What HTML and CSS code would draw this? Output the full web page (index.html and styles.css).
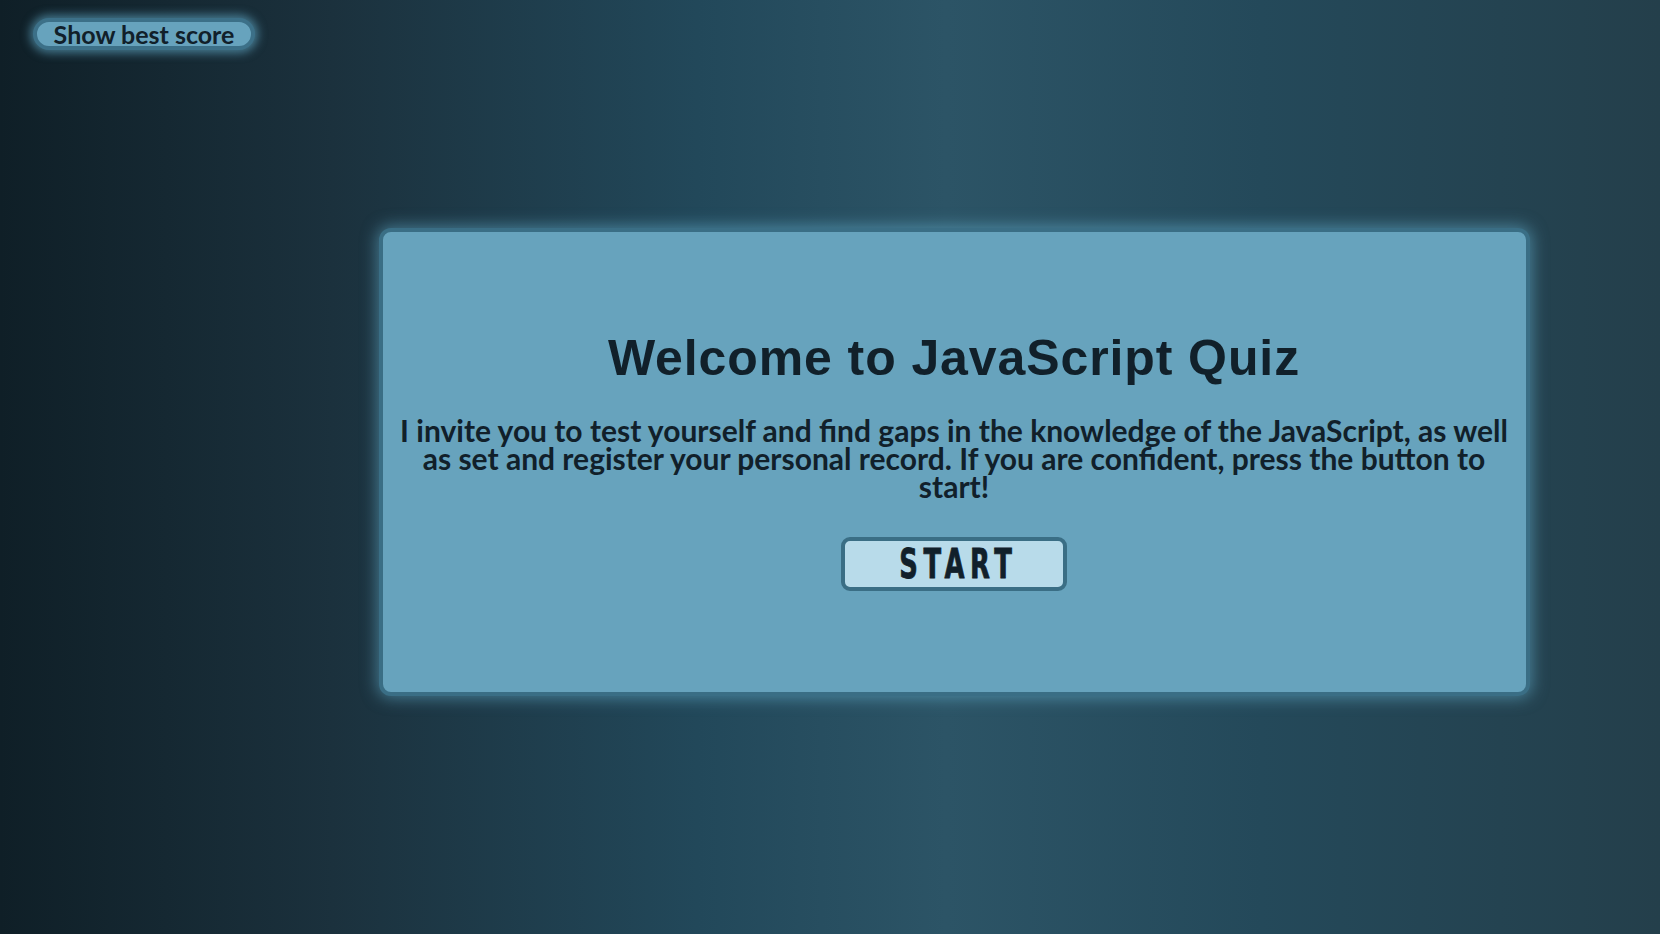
FILE: index.html
```html
<!DOCTYPE html>
<html lang="en">
<head>
<meta charset="utf-8">
<title>JavaScript Quiz</title>
<link rel="stylesheet" href="styles.css">
</head>
<body>
  <aside class="side">
    <button class="best-btn">Show best score</button>
  </aside>
  <main class="stage">
    <section class="card">
      <h1 class="title">Welcome to JavaScript Quiz</h1>
      <p class="intro">I invite you to test yourself and find gaps in the knowledge of the JavaScript, as well as set and register your personal record. If you are confident, press the button to start!</p>
      <button class="start-btn"><span class="start-label">START</span></button>
    </section>
  </main>
</body>
</html>
```
FILE: styles.css
```css
* { box-sizing: border-box; }

html, body { height: 100%; }

body {
  margin: 0;
  display: flex;
  background: linear-gradient(to right, #0f1f27 0%, #1b313d 20%, #22485a 42%, #2c5466 57%, #24495a 76%, #243f4b 100%);
  color: #11202a;
  font-family: "Lato", "Open Sans", sans-serif;
  overflow: hidden;
}

.side {
  width: 248px;
  flex: none;
  padding: 18px 0 0 33px;
}

.best-btn {
  display: block;
  width: 222px;
  height: 32px;
  padding: 0;
  border: 4px solid #3c7088;
  border-radius: 16px;
  background: #67a3bd;
  color: #11202a;
  font-family: "Lato", sans-serif;
  font-weight: 700;
  font-size: 25px;
  line-height: 22px;
  box-shadow: 0 0 10px 3px rgba(110, 190, 222, 0.55);
}

.stage {
  flex: 1;
  display: flex;
  align-items: center;
  justify-content: center;
  padding-bottom: 10px;
}

.card {
  width: 1151px;
  height: 468px;
  border: 4px solid #3a6e85;
  border-radius: 12px;
  background: #67a3bd;
  box-shadow: 0 0 16px 2px rgba(110, 190, 222, 0.5);
  display: flex;
  flex-direction: column;
  align-items: center;
  padding: 97px 16px 0;
}

.title {
  margin: 0;
  font-family: "Liberation Sans", Arial, sans-serif;
  font-weight: 700;
  font-size: 50px;
  line-height: 58px;
  letter-spacing: 0.9px;
  color: #11202a;
}

.intro {
  margin: 29px 0 0;
  font-family: "Lato", sans-serif;
  font-weight: 700;
  font-size: 30px;
  line-height: 28px;
  text-align: center;
  color: #11202a;
}

.start-btn {
  margin-top: 37px;
  width: 226px;
  height: 54px;
  padding: 0;
  border: 4px solid #3a6e85;
  border-radius: 9px;
  background: #b8dbea;
  color: #11202a;
  display: flex;
  align-items: center;
  justify-content: center;
}

.start-label {
  display: inline-block;
  font-family: "DejaVu Sans Condensed", "DejaVu Sans", sans-serif;
  font-weight: 700;
  font-size: 41px;
  line-height: 46px;
  letter-spacing: 8px;
  margin-right: -8px;
  transform: scaleX(0.7);
  -webkit-text-stroke: 0.8px #11202a;
}
```
